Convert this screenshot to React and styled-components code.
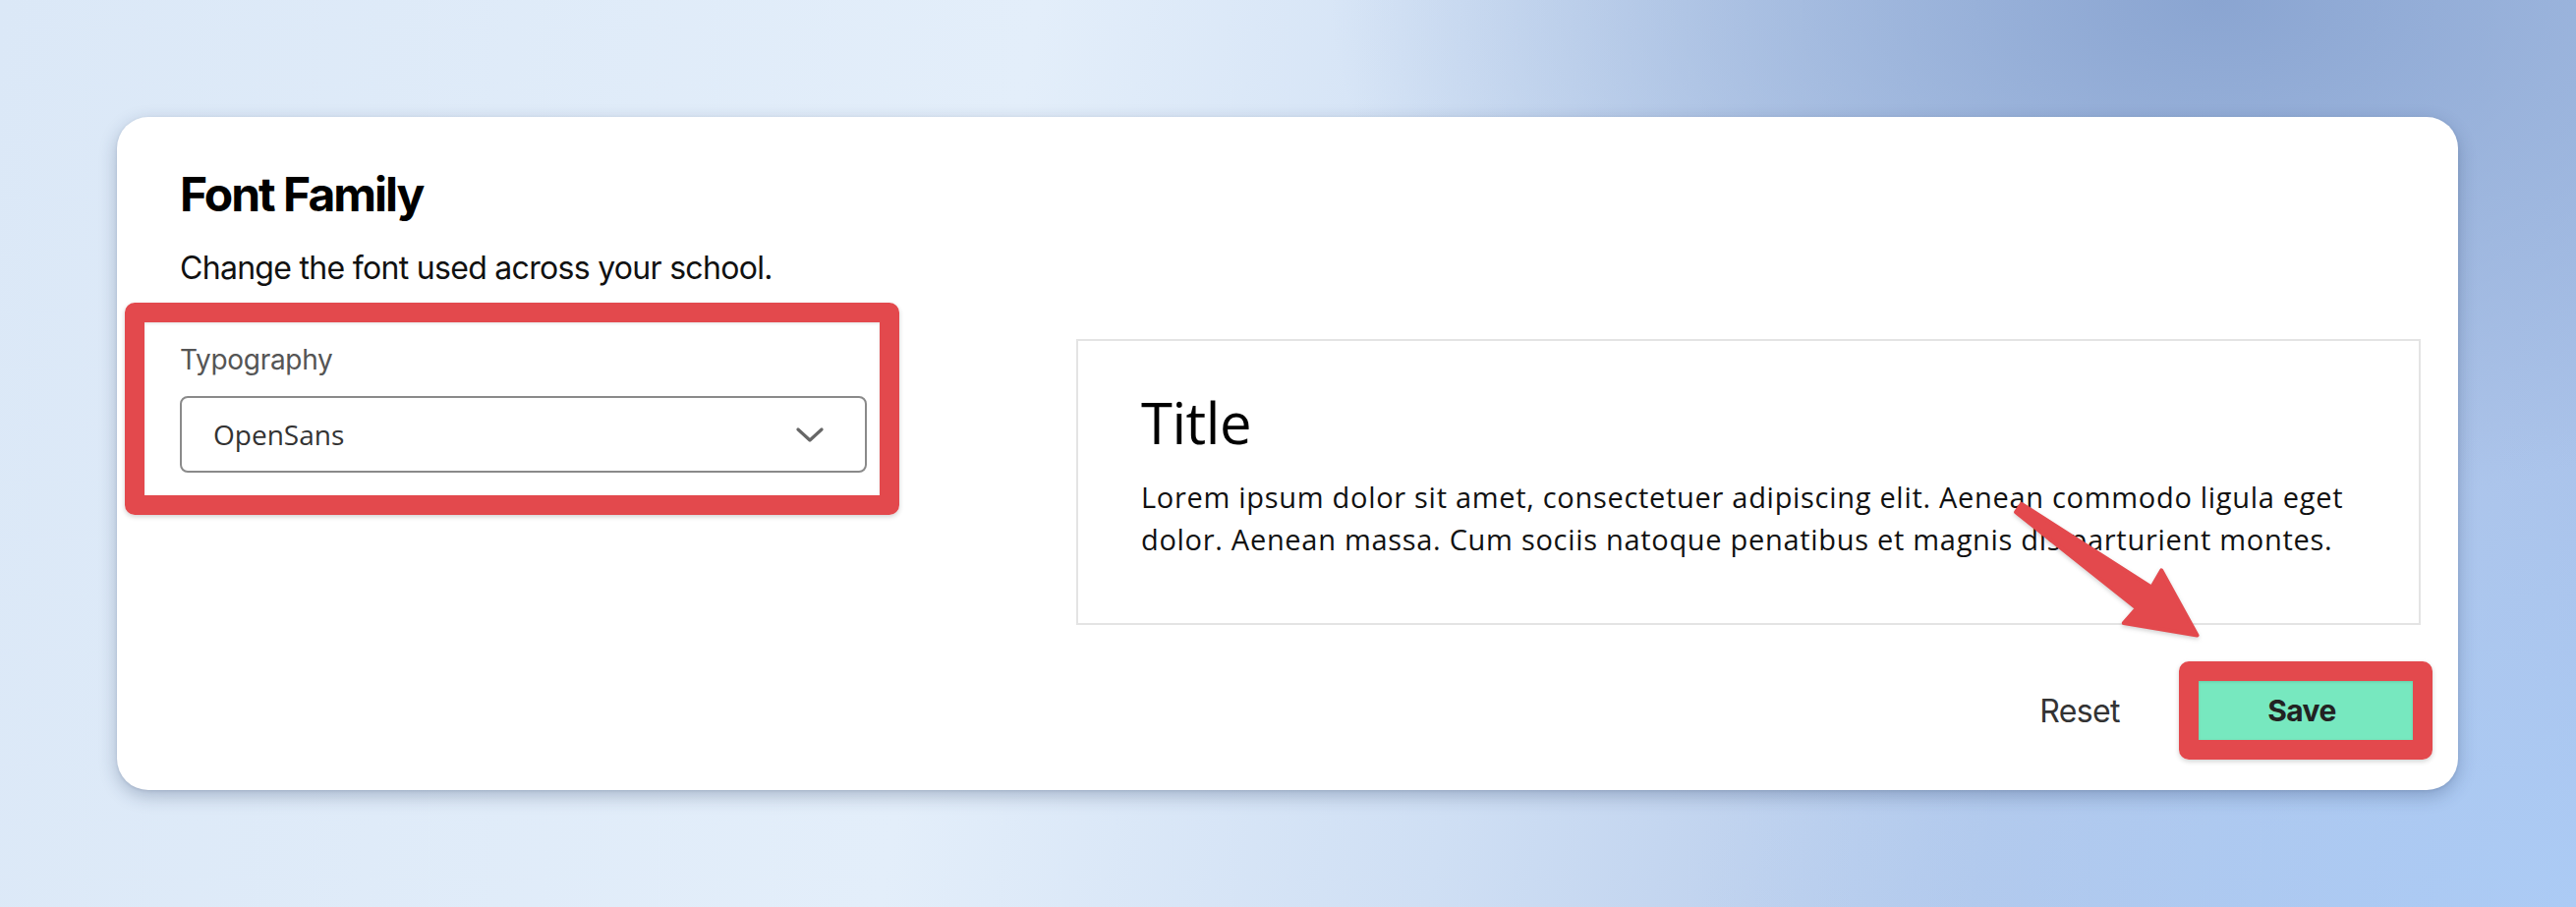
import React from "react";
import styled, { createGlobalStyle } from "styled-components";

const GlobalStyle = createGlobalStyle`
  html, body {
    margin: 0;
    padding: 0;
    height: 100%;
  }
  body {
    font-family: Inter, "Noto Sans", sans-serif;
    background:
      radial-gradient(ellipse 900px 520px at 86% 0%, rgba(136, 163, 208, 0.95) 0%, rgba(146, 172, 214, 0.7) 40%, rgba(160, 185, 225, 0) 100%),
      radial-gradient(ellipse 900px 500px at 100% 100%, rgba(172, 204, 246, 0.9) 0%, rgba(172, 204, 246, 0) 100%),
      linear-gradient(100deg, #dbe8f7 0%, #e3eefa 38%, #cfdff4 58%, #b4c9ea 78%, #a9c2ea 100%);
    background-attachment: fixed;
  }
`;

const Page = styled.main`
  box-sizing: border-box;
  min-height: 923px;
  padding: 119px 120px 0 119px;
`;

const Card = styled.section`
  position: relative;
  background: #ffffff;
  border-radius: 32px;
  padding: 50px 38px 46px 64px;
  box-shadow: 0 6px 18px rgba(30, 50, 90, 0.28), 0 1px 3px rgba(30, 50, 90, 0.12);
`;

const Heading = styled.h1`
  margin: 0;
  font-family: Inter, sans-serif;
  font-weight: 700;
  font-size: 48px;
  line-height: 58px;
  letter-spacing: -2px;
  color: #000;
`;

const Subtitle = styled.p`
  margin: 22px 0 0;
  font-family: Inter, sans-serif;
  font-size: 32px;
  line-height: 48px;
  letter-spacing: -0.7px;
  color: #111;
`;

const Columns = styled.div`
  display: grid;
  grid-template-columns: 699px 1fr;
  column-gap: 213px;
  align-items: start;
  margin-top: 48px;
`;

const Field = styled.div`
  display: flex;
  flex-direction: column;
  gap: 16px;
`;

const Label = styled.label`
  font-family: Inter, sans-serif;
  font-size: 28px;
  line-height: 42px;
  letter-spacing: -0.3px;
  color: #555;
`;

const Select = styled.div`
  box-sizing: border-box;
  height: 78px;
  display: flex;
  align-items: center;
  justify-content: space-between;
  padding: 0 42px 0 32px;
  border: 2px solid #8a8a8a;
  border-radius: 8px;
  font-family: "Open Sans", sans-serif;
  font-size: 28px;
  color: #333;
`;

const Preview = styled.div`
  border: 2px solid #e4e4e4;
  padding: 47px 64px 64px;
`;

const PreviewTitle = styled.h2`
  margin: 0;
  font-family: "Open Sans", sans-serif;
  font-weight: 400;
  font-size: 58px;
  line-height: 72px;
  letter-spacing: -0.5px;
  color: #000;
`;

const PreviewText = styled.p`
  margin: 18px 0 0;
  font-family: "Open Sans", sans-serif;
  font-size: 29px;
  line-height: 43px;
  letter-spacing: 0.7px;
  color: #111;
`;

const Footer = styled.div`
  display: flex;
  justify-content: flex-end;
  align-items: center;
  gap: 32px;
  margin-top: 52px;
`;

const GhostButton = styled.button`
  height: 70px;
  padding: 0 32px;
  border: 0;
  background: transparent;
  font-family: Inter, sans-serif;
  font-size: 32px;
  letter-spacing: -0.6px;
  color: #333;
`;

const PrimaryButton = styled.button`
  width: 242px;
  height: 70px;
  border: 0;
  border-radius: 4px;
  background: #77e8bf;
  font-family: Inter, sans-serif;
  font-weight: 700;
  font-size: 30px;
  letter-spacing: -0.6px;
  color: #222;
`;

const Callout = styled.div`
  position: absolute;
  left: ${(p) => p.$left}px;
  top: ${(p) => p.$top}px;
  width: ${(p) => p.$width}px;
  height: ${(p) => p.$height}px;
  box-sizing: border-box;
  border: 20px solid #e3494d;
  border-radius: 10px;
  box-shadow: 0 2px 5px rgba(0, 0, 0, 0.18), inset 0 1px 3px rgba(0, 0, 0, 0.12);
  pointer-events: none;
`;

const ArrowLayer = styled.svg`
  position: absolute;
  left: 1911px;
  top: 381px;
  width: 220px;
  height: 160px;
  overflow: visible;
  pointer-events: none;
  filter: drop-shadow(0 2px 2px rgba(0, 0, 0, 0.18));
`;

function Chevron() {
  return (
    <svg width="28" height="16" viewBox="0 0 28 16" aria-hidden="true">
      <polyline
        points="2,3 14,14 26,3"
        fill="none"
        stroke="#666"
        strokeWidth="3.2"
        strokeLinecap="round"
        strokeLinejoin="round"
      />
    </svg>
  );
}

function Arrow() {
  return (
    <ArrowLayer viewBox="2030 500 220 160" aria-hidden="true">
      <polygon
        points="2056.9,512.9 2189.2,597.8 2199.2,580.4 2235.5,646.5 2160.8,634 2174,619 2051.1,521.1"
        fill="#e3494d"
        stroke="#e3494d"
        strokeWidth="4"
        strokeLinejoin="round"
      />
    </ArrowLayer>
  );
}

export default function App() {
  return (
    <>
      <GlobalStyle />
      <Page>
        <Card>
          <Heading>Font Family</Heading>
          <Subtitle>Change the font used across your school.</Subtitle>
          <Columns>
            <Field>
              <Label>Typography</Label>
              <Select>
                <span>OpenSans</span>
                <Chevron />
              </Select>
            </Field>
            <Preview>
              <PreviewTitle>Title</PreviewTitle>
              <PreviewText>
                Lorem ipsum dolor sit amet, consectetuer adipiscing elit. Aenean commodo ligula eget
                dolor. Aenean massa. Cum sociis natoque penatibus et magnis dis parturient montes.
              </PreviewText>
            </Preview>
          </Columns>
          <Footer>
            <GhostButton type="button">Reset</GhostButton>
            <PrimaryButton type="button">Save</PrimaryButton>
          </Footer>
          <Callout $left={8} $top={189} $width={788} $height={216} />
          <Arrow />
          <Callout $left={2098} $top={554} $width={258} $height={100} />
        </Card>
      </Page>
    </>
  );
}
